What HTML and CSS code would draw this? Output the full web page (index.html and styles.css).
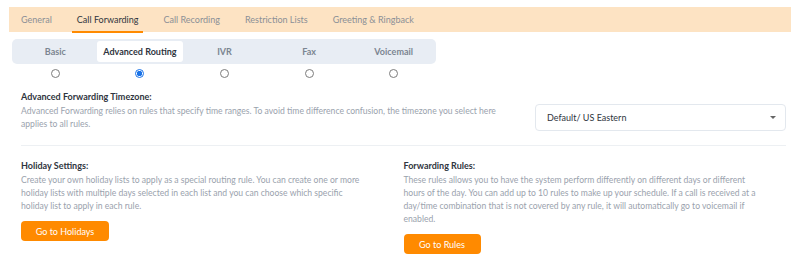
FILE: index.html
```html
<!DOCTYPE html>
<html lang="en">
<head>
  <meta charset="UTF-8">
  <meta name="viewport" content="width=device-width, initial-scale=1.0">
  <title>Call Forwarding</title>
  <link rel="stylesheet" href="styles.css">
</head>
<body>
  <nav class="tabs">
    <a class="tab">General</a>
    <a class="tab active">Call Forwarding</a>
    <a class="tab">Call Recording</a>
    <a class="tab">Restriction Lists</a>
    <a class="tab">Greeting &amp; Ringback</a>
  </nav>

  <div class="modes">
    <div class="mode-bar">
      <span class="mode">Basic</span>
      <span class="mode active">Advanced Routing</span>
      <span class="mode">IVR</span>
      <span class="mode">Fax</span>
      <span class="mode">Voicemail</span>
    </div>
    <div class="mode-radios">
      <label><input type="radio" name="mode"></label>
      <label><input type="radio" name="mode" checked></label>
      <label><input type="radio" name="mode"></label>
      <label><input type="radio" name="mode"></label>
      <label><input type="radio" name="mode"></label>
    </div>
  </div>

  <main>
    <section class="timezone">
      <div>
        <h3>Advanced Forwarding Timezone:</h3>
        <p>Advanced Forwarding relies on rules that specify time ranges. To avoid time difference confusion, the timezone you select here applies to all rules.</p>
      </div>
      <div class="select">
        <span>Default/ US Eastern</span>
        <span class="caret"></span>
      </div>
    </section>

    <section class="columns">
      <div class="col holidays">
        <h3>Holiday Settings:</h3>
        <p>Create your own holiday lists to apply as a special routing rule. You can create one or more holiday lists with multiple days selected in each list and you can choose which specific holiday list to apply in each rule.</p>
        <button>Go to Holidays</button>
      </div>
      <div class="col rules">
        <h3>Forwarding Rules:</h3>
        <p>These rules allows you to have the system perform differently on different days or different hours of the day. You can add up to 10 rules to make up your schedule. If a call is received at a day/time combination that is not covered by any rule, it will automatically go to voicemail if enabled.</p>
        <button>Go to Rules</button>
      </div>
    </section>
  </main>
</body>
</html>
```

FILE: styles.css
```css
:root {
  --orange: #ff8a00;
  --peach: #fde3c3;
  --dark: #2f3540;
  --muted: #9aa2ad;
  --line: #edf0f3;
}

body {
  margin: 0;
  padding: 7px 9px;
  font-family: Lato, "Open Sans", sans-serif;
  font-size: 9px;
  color: var(--dark);
  background: #fff;
}

.tabs {
  display: flex;
  gap: 15px;
  height: 25px;
  padding-left: 7px;
  background: var(--peach);
  white-space: nowrap;
}

.tab {
  display: flex;
  align-items: center;
  padding: 0 5px;
  color: #8b8f96;
  border-bottom: 2px solid transparent;
  margin-bottom: -1px;
}

.tab.active {
  color: var(--dark);
  border-bottom-color: var(--orange);
}

.modes {
  padding: 7px 0 0 3px;
}

.mode-bar {
  display: grid;
  grid-template-columns: repeat(5, 84.6px);
  width: 424px;
  height: 25px;
  padding: 0 0 0 1px;
  box-sizing: border-box;
  align-items: center;
  background: #e8edf4;
  border-radius: 5px;
  white-space: nowrap;
}

.mode {
  justify-self: center;
  padding: 5px 6px;
  font-weight: 700;
  color: #7b8591;
}

.mode.active {
  background: #fff;
  color: var(--dark);
  border-radius: 3px;
}

.mode-radios {
  display: grid;
  grid-template-columns: repeat(5, 84.6px);
  padding: 5px 0 0 1px;
}

.mode-radios label {
  display: flex;
  justify-content: center;
}

input[type=radio] {
  appearance: none;
  margin: 0;
  width: 9px;
  height: 9px;
  border: 1px solid #7c7c7c;
  border-radius: 50%;
  box-sizing: border-box;
}

input[type=radio]:checked {
  border-color: #1a73e8;
  background: radial-gradient(circle, #1a73e8 0 2.5px, #fff 3px);
}

main {
  padding: 0 5px 0 12px;
}

h3 {
  margin: 0;
  font-size: 9px;
  font-weight: 700;
  color: var(--dark);
}

p {
  margin: 3px 0 0;
  font-size: 8.6px;
  line-height: 13px;
  color: var(--muted);
}

.timezone {
  display: grid;
  grid-template-columns: 1fr 251px;
  gap: 16px;
  padding: 13px 0 14px;
  border-bottom: 1px solid var(--line);
}

.timezone p {
  max-width: 490px;
}

.select {
  align-self: end;
  display: flex;
  justify-content: space-between;
  align-items: center;
  height: 27px;
  padding: 0 9px 0 11px;
  box-sizing: border-box;
  border: 1px solid #e3e8ee;
  border-radius: 4px;
  color: var(--dark);
}

.caret {
  width: 0;
  height: 0;
  border-left: 3px solid transparent;
  border-right: 3px solid transparent;
  border-top: 3px solid #666;
}

.columns {
  display: grid;
  grid-template-columns: 1fr 1fr;
  padding-top: 14px;
}

.col {
  padding-right: 30px;
}

.holidays p {
  max-width: 346px;
}

button {
  margin-top: 8px;
  height: 20px;
  padding: 0;
  border: 0;
  border-radius: 4px;
  background: var(--orange);
  color: #fff;
  font-family: inherit;
  font-size: 9px;
  white-space: nowrap;
}

.holidays button {
  width: 88px;
}

.rules button {
  width: 77px;
}
```
